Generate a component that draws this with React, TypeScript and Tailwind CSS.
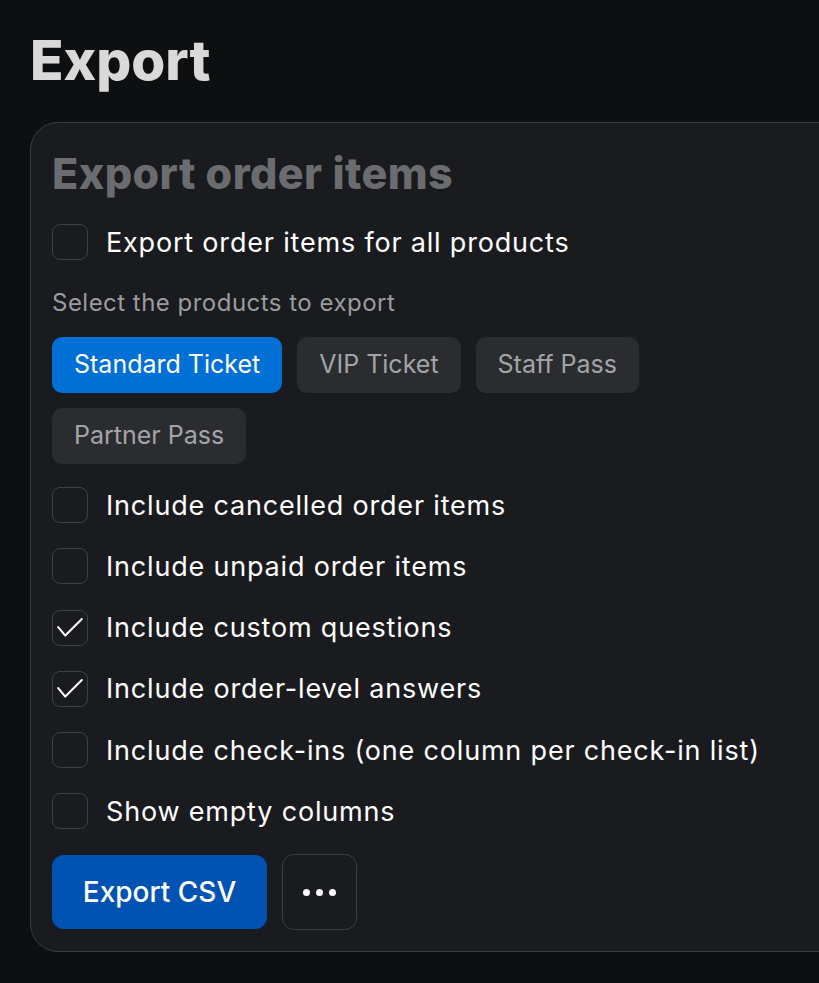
import { useState } from 'react'

const products = ['Standard Ticket', 'VIP Ticket', 'Staff Pass', 'Partner Pass']

const options = [
  { label: 'Include cancelled order items', checked: false },
  { label: 'Include unpaid order items', checked: false },
  { label: 'Include custom questions', checked: true },
  { label: 'Include order-level answers', checked: true },
  { label: 'Include check-ins (one column per check-in list)', checked: false },
  { label: 'Show empty columns', checked: false },
]

function Checkbox({ checked }: { checked: boolean }) {
  return (
    <span className="flex size-[36px] shrink-0 items-center justify-center rounded-[8px] border border-[#3f4044] bg-[#1a1b1e]">
      {checked && (
        <svg viewBox="0 0 36 36" className="size-[36px]" fill="none" stroke="white" strokeWidth={2.2} strokeLinecap="round" strokeLinejoin="round">
          <path d="M5.5 17l7.5 9 17.5-17.5" />
        </svg>
      )}
    </span>
  )
}

function CheckRow({ label, checked }: { label: string; checked: boolean }) {
  return (
    <label className="flex h-[36px] items-center gap-[18px]">
      <Checkbox checked={checked} />
      <span className="text-[27px] leading-none tracking-[0.03em] text-white">{label}</span>
    </label>
  )
}

export default function App() {
  const [selected] = useState('Standard Ticket')

  return (
    <div
      className="min-h-screen overflow-hidden bg-[#0e0f11] pl-[30px] pt-[27px]"
      style={{ fontFamily: 'Inter, "Noto Sans", sans-serif' }}
    >
      <h1 className="text-[55px] font-extrabold leading-[66px] text-[#d9d9d9]">
        Export
      </h1>

      <section className="mt-[29px] w-[840px] rounded-[28px] border border-[#3b3c40] bg-[#1a1b1e] px-[21px] pb-[21px] pt-[24px]">
        <h2 className="text-[43px] font-extrabold leading-[52px] tracking-[0.01em] text-[#6b6c70]">
          Export order items
        </h2>

        <div className="mt-[25px]">
          <CheckRow label="Export order items for all products" checked={false} />
        </div>

        <p className="mt-[29px] text-[24px] leading-[28px] tracking-[0.02em] text-[#9a9b9f]">
          Select the products to export
        </p>

        <div className="mt-[20px] flex w-[600px] flex-wrap gap-[15px]">
          {products.map((p) => (
            <button
              key={p}
              className={
                p === selected
                  ? 'h-[56px] rounded-[10px] bg-[#006fd6] px-[22px] text-[25px] text-white'
                  : 'h-[56px] rounded-[10px] bg-[#2b2c30] px-[22px] text-[25px] text-[#a3a4a8]'
              }
            >
              {p}
            </button>
          ))}
        </div>

        <div className="mt-[23px] flex flex-col gap-[25.3px]">
          {options.map((o) => (
            <CheckRow key={o.label} label={o.label} checked={o.checked} />
          ))}
        </div>

        <div className="mt-[25px] flex items-center gap-[15px]">
          <button className="h-[74px] w-[215px] rounded-[12px] bg-[#0053b3] text-[28px] font-medium text-white">
            Export CSV
          </button>
          <button className="flex h-[76px] w-[75px] items-center justify-center gap-[6px] rounded-[12px] border border-[#3b3c40]">
            <span className="size-[7px] rounded-full bg-white" />
            <span className="size-[7px] rounded-full bg-white" />
            <span className="size-[7px] rounded-full bg-white" />
          </button>
        </div>
      </section>
    </div>
  )
}
